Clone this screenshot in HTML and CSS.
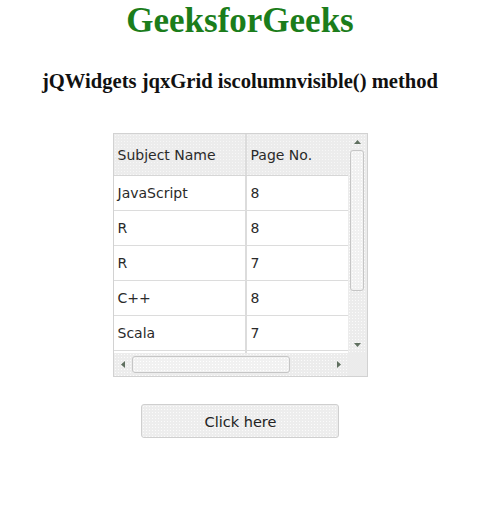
FILE: index.html
```html
<!DOCTYPE html>
<html>
<head>
<meta charset="utf-8">
<link rel="stylesheet" href="styles.css">
</head>
<body>
<div class="page">
  <h1 class="title">GeeksforGeeks</h1>
  <h3 class="subtitle">jQWidgets jqxGrid iscolumnvisible() method</h3>
  <div class="grid">
    <div class="grid-main">
      <div class="table">
        <div class="row head"><div class="cell c1">Subject Name</div><div class="cell c2">Page No.</div></div>
        <div class="row"><div class="cell c1">JavaScript</div><div class="cell c2">8</div></div>
        <div class="row"><div class="cell c1">R</div><div class="cell c2">8</div></div>
        <div class="row"><div class="cell c1">R</div><div class="cell c2">7</div></div>
        <div class="row"><div class="cell c1">C++</div><div class="cell c2">8</div></div>
        <div class="row"><div class="cell c1">Scala</div><div class="cell c2">7</div></div>
        <div class="row"><div class="cell c1"></div><div class="cell c2"></div></div>
      </div>
      <div class="vscroll">
        <svg class="arrow" width="9" height="6" viewBox="0 0 9 6"><path d="M4.5 1 L8 5 L1 5 Z" fill="#5f6f5f"/></svg>
        <div class="vtrack"><div class="vthumb"></div></div>
        <svg class="arrow" width="9" height="6" viewBox="0 0 9 6"><path d="M1 1 L8 1 L4.5 5 Z" fill="#5f6f5f"/></svg>
      </div>
    </div>
    <div class="hbar">
      <div class="hscroll">
        <svg class="arrow" width="6" height="9" viewBox="0 0 6 9"><path d="M5 1 L5 8 L1 4.5 Z" fill="#5f6f5f"/></svg>
        <div class="htrack"><div class="hthumb"></div></div>
        <svg class="arrow" width="6" height="9" viewBox="0 0 6 9"><path d="M1 1 L5 4.5 L1 8 Z" fill="#5f6f5f"/></svg>
      </div>
      <div class="corner"></div>
    </div>
  </div>
  <button class="btn">Click here</button>
</div>
</body>
</html>
```
FILE: styles.css
```css
html, body {
  margin: 0;
  padding: 0;
  background: #fff;
}
.page {
  display: flex;
  flex-direction: column;
  align-items: center;
  padding-right: 3px;
}
.title {
  margin: 1px 0 0;
  font-family: "Liberation Serif", serif;
  font-weight: bold;
  font-size: 35px;
  line-height: 40px;
  color: #1b7d1b;
}
.subtitle {
  margin: 28px 0 0;
  font-family: "Liberation Serif", serif;
  font-weight: bold;
  font-size: 20.6px;
  line-height: 24px;
  color: #111;
}
.grid {
  margin-top: 40px;
  width: 253px;
  height: 242px;
  border: 1px solid #d2d2d2;
  display: flex;
  flex-direction: column;
  font-family: "DejaVu Sans", Verdana, sans-serif;
  font-size: 14px;
  color: #2a2a2a;
}
.grid-main {
  display: flex;
  height: 219px;
  overflow: hidden;
}
.table {
  width: 234px;
  overflow: hidden;
}
.row {
  display: flex;
  height: 34px;
  border-bottom: 1px solid #dcdcdc;
  background: #fff;
}
.row.head {
  height: 41px;
  border-bottom: 1px solid #d6d6d6;
  background: #ececec radial-gradient(circle, #f7f7f7 0.6px, transparent 1px) 0 0 / 3px 3px;
}
.cell {
  display: flex;
  align-items: center;
  padding-left: 4px;
  box-sizing: border-box;
}
.c1 {
  width: 133px;
  border-right: 2px solid #dcdcdc;
}
.c2 {
  flex: 1;
}
.vscroll {
  width: 19px;
  display: flex;
  flex-direction: column;
  align-items: center;
  background: #ececec radial-gradient(circle, #fbfbfb 0.6px, transparent 1px) 0 0 / 3px 3px;
}
.vscroll .arrow {
  margin: 5px 0;
}
.vtrack {
  flex: 1;
  width: 100%;
  display: flex;
  justify-content: center;
}
.vthumb {
  width: 14px;
  height: 141px;
  border: 1px solid #c6c6c6;
  border-radius: 3px;
  box-sizing: border-box;
  background: #f1f1f1 radial-gradient(circle, #ffffff 0.6px, transparent 1px) 0 0 / 3px 3px;
}
.hbar {
  flex: 1;
  display: flex;
}
.hscroll {
  width: 234px;
  display: flex;
  align-items: center;
  background: #ececec radial-gradient(circle, #fbfbfb 0.6px, transparent 1px) 0 0 / 3px 3px;
}
.hscroll .arrow {
  margin: 0 6px;
}
.htrack {
  flex: 1;
  height: 100%;
  display: flex;
  align-items: center;
}
.hthumb {
  width: 158px;
  height: 17px;
  border: 1px solid #c6c6c6;
  border-radius: 3px;
  box-sizing: border-box;
  background: #f1f1f1 radial-gradient(circle, #ffffff 0.6px, transparent 1px) 0 0 / 3px 3px;
}
.corner {
  flex: 1;
  background: #e0e0e0 radial-gradient(circle, #f0f0f0 0.6px, transparent 1px) 0 0 / 2px 2px;
}
.btn {
  margin-top: 27px;
  width: 198px;
  height: 34px;
  border: 1px solid #cfcfcf;
  border-radius: 3px;
  background: #ededed radial-gradient(circle, #fbfbfb 0.6px, transparent 1px) 0 0 / 3px 3px;
  font-family: "DejaVu Sans", Verdana, sans-serif;
  font-size: 14.5px;
  color: #222;
  padding: 0 0 0 1px;
  line-height: 34px;
}
```
